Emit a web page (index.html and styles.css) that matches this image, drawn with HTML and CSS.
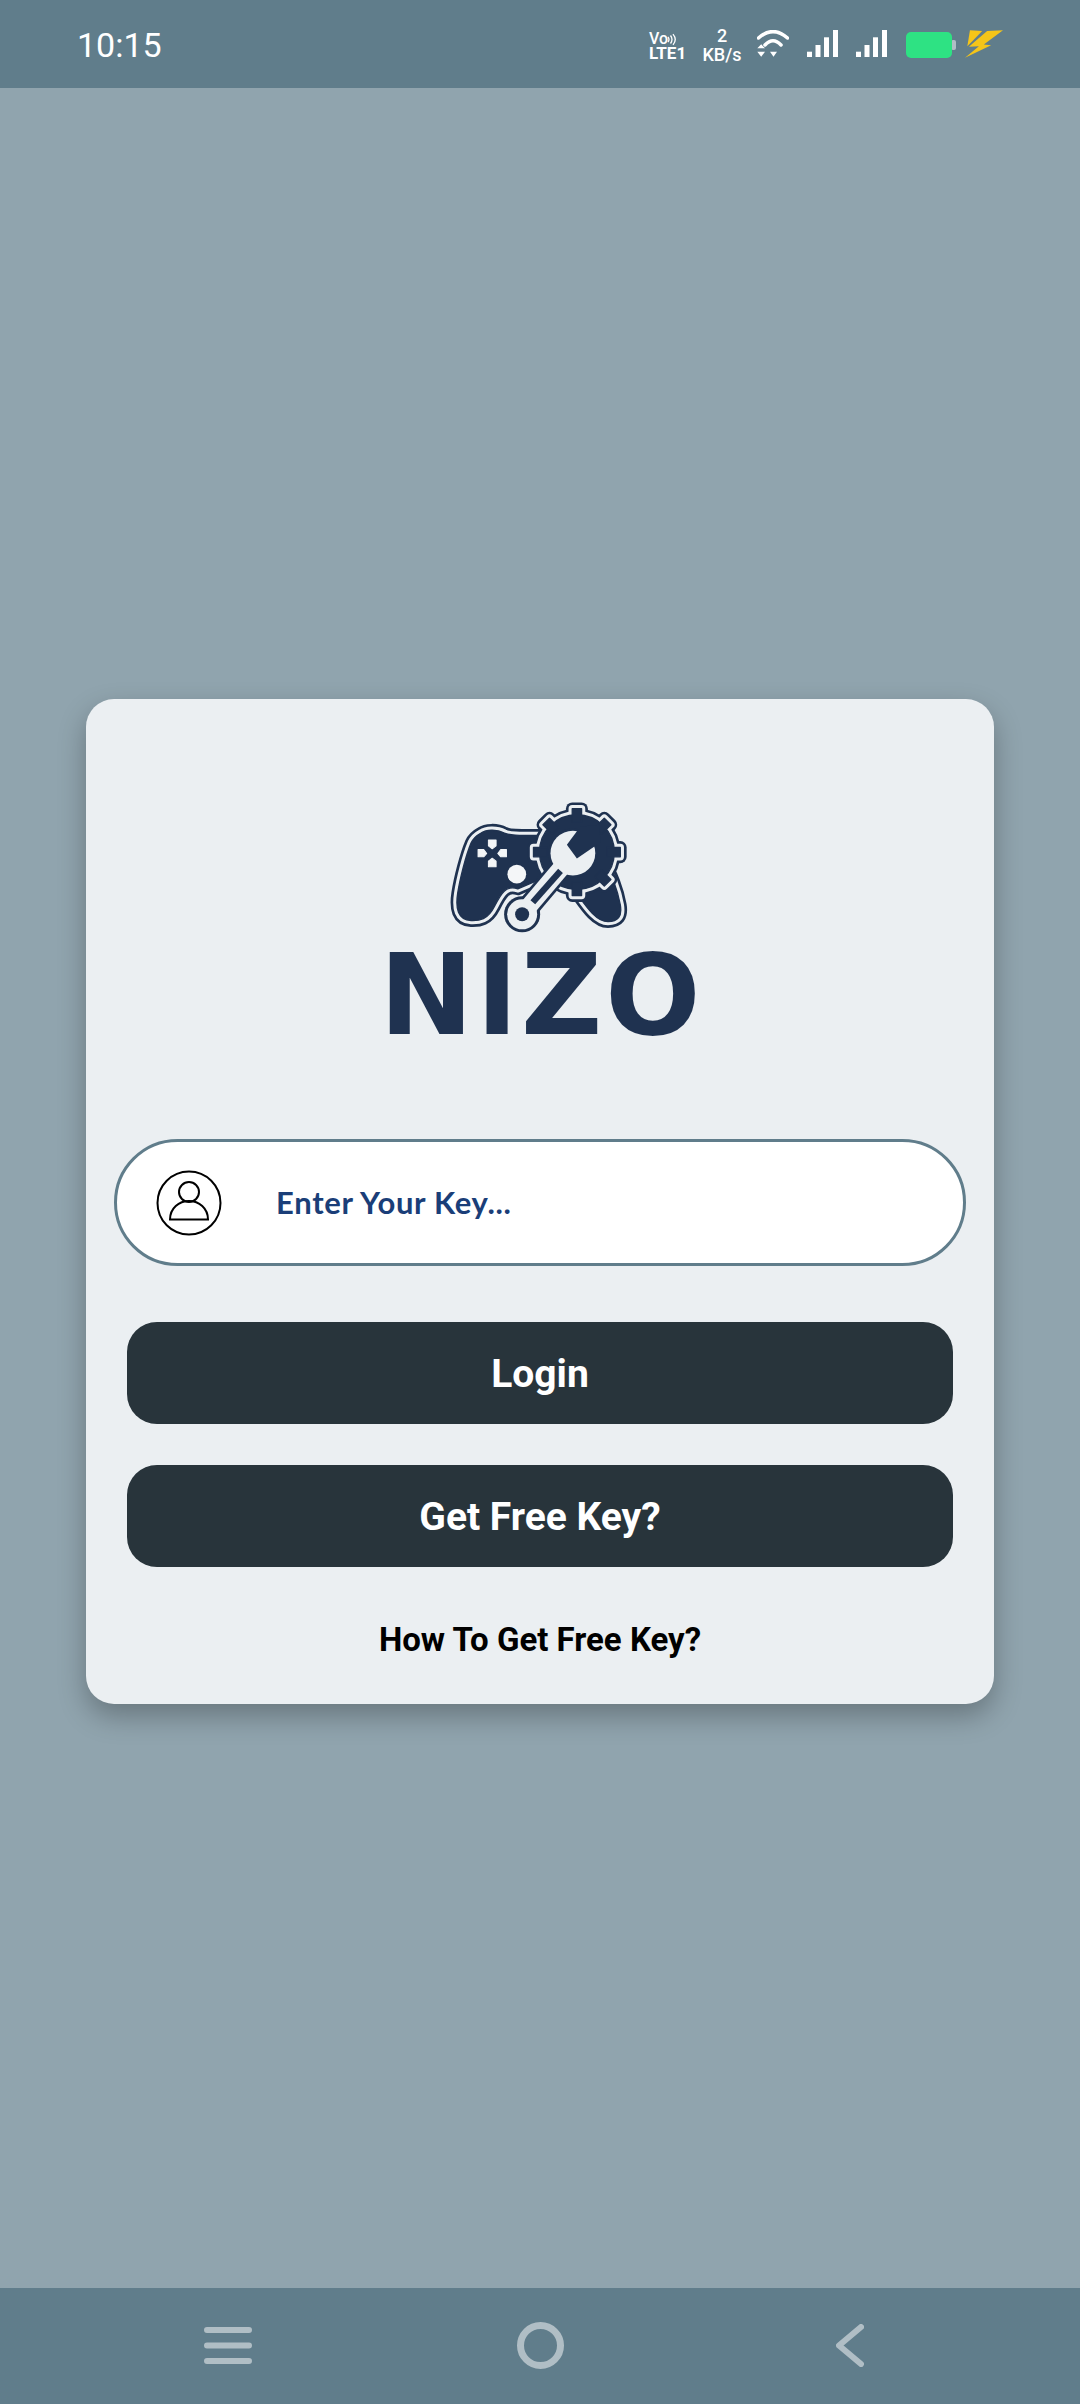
FILE: index.html
```html
<!DOCTYPE html>
<html lang="en">
<head>
<meta charset="utf-8">
<title>NIZO</title>
<link rel="stylesheet" href="styles.css">
</head>
<body>
<div class="screen">
  <header class="status-bar">
    <span class="time">10:15</span>
    <div class="status-icons">
      <div class="volte">
        <div class="volte-top"><span>Vo</span>
          <svg class="volte-arcs" viewBox="0 0 10 12"><path d="M1 3.5Q3 6 1 8.5M3.5 2Q6.5 6 3.5 10M6 .6Q10.5 6 6 11.4"/></svg>
        </div>
        <div class="volte-bottom">LTE1</div>
      </div>
      <div class="speed"><span>2</span><span>KB/s</span></div>
      <svg class="wifi" viewBox="0 0 32 27">
        <path class="wifi-arc" d="M1.5 8Q16 -4.8 30.5 8M8 15Q16 6.4 24 15"/>
        <path class="wifi-fill" d="M13 21.7H20L16.5 26.7ZM.3 18.3H8L4.2 14.3ZM.3 21.7H8L4.2 26.7Z"/>
      </svg>
      <svg class="signal signal-a" viewBox="0 0 32 27">
        <rect x="0" y="21.7" width="5" height="5.3"/><rect x="8.5" y="15" width="5" height="12"/><rect x="17" y="7.3" width="5" height="19.7"/><rect x="26" y="0" width="5" height="27"/>
      </svg>
      <svg class="signal signal-b" viewBox="0 0 32 27">
        <rect x="0" y="21.7" width="5" height="5.3"/><rect x="8.5" y="15" width="5" height="12"/><rect x="17" y="7.3" width="5" height="19.7"/><rect x="26" y="0" width="5" height="27"/>
      </svg>
      <svg class="battery" viewBox="0 0 50 26">
        <rect class="battery-cap" x="45" y="8" width="5" height="10" rx="2"/>
        <rect class="battery-body" x="0" y="0" width="46" height="26" rx="5"/>
      </svg>
      <svg class="bolt" viewBox="1033 60 115 83">
        <path d="M1048 60L1085 62L1058 90L1040 108Z"/>
        <path d="M1148 60L1100 62L1062 95L1045 110L1075 108L1033 143L1112 105L1090 103Z"/>
      </svg>
    </div>
  </header>

  <main class="content">
    <section class="card">
      <div class="logo">
        <svg class="logo-mark" viewBox="230 60 560 410">
          <defs>
            <path id="pad" d="M335 165C350 155 380 152 405 165C420 172 440 172 520 172L700 250C725 280 745 340 752 380C758 415 745 430 715 430C680 430 650 385 625 350L600 300L520 300L445 332C410 320 395 345 375 385C355 425 330 428 305 427C265 425 258 390 265 345C272 300 290 230 305 195C312 180 322 172 335 165Z"/>
            <g id="gear">
              <circle cx="622" cy="222" r="112"/>
              <g transform="translate(622 222)">
                <rect x="-14" y="-130" width="28" height="40"/>
                <rect x="-14" y="-130" width="28" height="40" transform="rotate(45)"/>
                <rect x="-14" y="-130" width="28" height="40" transform="rotate(90)"/>
                <rect x="-14" y="-130" width="28" height="40" transform="rotate(135)"/>
                <rect x="-14" y="-130" width="28" height="40" transform="rotate(180)"/>
                <rect x="-14" y="-130" width="28" height="40" transform="rotate(225)"/>
                <rect x="-14" y="-130" width="28" height="40" transform="rotate(270)"/>
                <rect x="-14" y="-130" width="28" height="40" transform="rotate(315)"/>
              </g>
            </g>
          </defs>
          <use href="#pad" class="layer-outer"/>
          <use href="#pad" class="layer-white"/>
          <use href="#pad" class="layer-inner"/>
          <g class="pad-buttons">
            <path d="M357 186H380V203L368.5 212L357 203Z"/>
            <path d="M326 214H343L352 226L343 236H326Z"/>
            <path d="M411 214H394L385 226L394 236H411Z"/>
            <path d="M357 266H380V249L368.5 240L357 249Z"/>
            <circle cx="442" cy="288" r="28"/>
          </g>
          <use href="#gear" class="layer-outer"/>
          <use href="#gear" class="layer-white"/>
          <use href="#gear" class="layer-inner"/>
          <g class="wrench-outline">
            <path d="M600 240L458 408"/>
            <circle cx="610" cy="225" r="74"/>
            <circle cx="458" cy="408" r="54"/>
          </g>
          <g class="wrench-body">
            <path d="M600 240L458 408"/>
            <circle cx="610" cy="225" r="67"/>
            <circle cx="458" cy="408" r="45"/>
          </g>
          <path class="wrench-dark" d="M632 146L592 200L622 241L692 193L690 140Z"/>
          <path class="wrench-slot" d="M573 278L490 372"/>
          <circle class="wrench-dark" cx="458" cy="408" r="21"/>
        </svg>
        <div class="logo-word">NIZO</div>
      </div>

      <div class="key-field">
        <svg class="user-icon" viewBox="0 0 66 66">
          <circle cx="33" cy="33" r="31.5"/>
          <circle cx="33" cy="22" r="10"/>
          <path d="M14 49.5C14 38 23 31 33 31S52 38 52 49.5Z"/>
        </svg>
        <span class="key-placeholder">Enter Your Key...</span>
      </div>

      <div class="actions">
        <button class="btn">Login</button>
        <button class="btn">Get Free Key?</button>
      </div>
      <a class="help-link">How To Get Free Key?</a>
    </section>
  </main>

  <nav class="nav-bar">
    <svg class="nav-menu" viewBox="0 0 48 37">
      <path d="M3 3H45M3 18.5H45M3 34H45"/>
    </svg>
    <svg class="nav-home" viewBox="0 0 47 47">
      <circle cx="23.5" cy="23.5" r="20"/>
    </svg>
    <svg class="nav-back" viewBox="0 0 28 43">
      <path d="M25 3L3 21.5L25 40"/>
    </svg>
  </nav>
</div>
</body>
</html>
```
FILE: styles.css
```css
* { box-sizing: border-box; }
html, body { margin: 0; padding: 0; }
body { font-family: Roboto, "Liberation Sans", sans-serif; background: #90a4ae; }

.screen { width: 1080px; height: 2404px; display: flex; flex-direction: column; overflow: hidden; background: #90a4ae; }

/* Status bar */
.status-bar { height: 88px; flex: none; background: #607d8b; display: flex; align-items: center; justify-content: space-between; padding: 0 77px 0 77px; color: #fff; }
.time { font-size: 34px; line-height: 1; margin-top: 2px; }
.status-icons { display: flex; align-items: center; height: 88px; }
.volte { width: 36px; margin-top: 4px; font-weight: 700; }
.volte-top { display: flex; align-items: center; height: 14px; font-size: 16px; line-height: 14px; font-weight: 500; }
.volte-arcs { width: 10px; height: 13px; margin-left: -1px; fill: none; stroke: #fff; stroke-width: 1.3; }
.volte-bottom { font-size: 17px; line-height: 14px; }
.speed { width: 42px; margin-left: 16px; margin-top: 1px; display: flex; flex-direction: column; align-items: center; font-size: 18px; line-height: 19px; font-weight: 500; }
.wifi { width: 32px; height: 27px; margin-left: 14px; margin-top: -1px; }
.wifi-arc { fill: none; stroke: #fff; stroke-width: 3.5; stroke-linecap: round; }
.wifi-fill { fill: #fff; }
.signal { width: 32px; height: 27px; fill: #fff; margin-top: -1px; }
.signal-a { margin-left: 18px; }
.signal-b { margin-left: 17px; }
.battery { width: 50px; height: 26px; margin-left: 18px; margin-top: 2px; }
.battery-body { fill: #2ee283; }
.battery-cap { fill: #b0bec5; }
.bolt { width: 38px; height: 28px; margin-left: 9px; fill: #f5c518; }

/* Main */
.content { flex: 1; padding: 611px 86px 0; }
.card { height: 1005px; background: #ebeff2; border-radius: 28px; box-shadow: 0 12px 28px rgba(0, 0, 0, .28); display: flex; flex-direction: column; align-items: center; padding: 99px 28px 0; }

.logo { display: flex; flex-direction: column; align-items: center; height: 341px; }
.logo-mark { width: 187px; height: 137px; display: block; }
.logo-mark use { stroke-linejoin: round; }
.layer-outer { fill: #1f3250; stroke: #1f3250; stroke-width: 38; }
.layer-white { fill: #1f3250; stroke: #ebeff2; stroke-width: 22; }
.layer-inner { fill: #1f3250; stroke: #1f3250; stroke-width: 4; }
.pad-buttons { fill: #f4f6f8; stroke: #f4f6f8; stroke-width: 3; stroke-linejoin: round; }
.pad-buttons circle { stroke: none; }
.wrench-outline { stroke: #1f3250; fill: #1f3250; }
.wrench-outline path { stroke-width: 68; fill: none; }
.wrench-body { stroke: #ebeff2; fill: #ebeff2; }
.wrench-body path { stroke-width: 52; fill: none; }
.wrench-outline circle, .wrench-body circle { stroke: none; }
.wrench-dark { fill: #1f3250; }
.wrench-slot { stroke: #1f3250; stroke-width: 19; fill: none; }
.logo-word { font-family: "DejaVu Sans", Inter, sans-serif; font-weight: 700; font-size: 112px; line-height: 98px; letter-spacing: 3px; margin-right: -3px; margin-top: 11px; color: #1f3250; height: 98px; }

.key-field { width: 852px; height: 127px; flex: none; background: #fff; border: 3px solid #607d8b; border-radius: 64px; display: flex; align-items: center; padding-left: 39px; }
.user-icon { width: 66px; height: 66px; flex: none; fill: none; stroke: #000; stroke-width: 2; }
.key-placeholder { margin-left: 54px; font-family: Lato, "Open Sans", sans-serif; font-weight: 700; font-size: 31px; letter-spacing: .7px; color: #1a3e78; line-height: 1; }

.actions { width: 826px; margin-top: 56px; display: flex; flex-direction: column; gap: 41px; }
.btn { height: 102px; border: none; border-radius: 30px; background: #28343b; color: #fff; font-family: Roboto, "Liberation Sans", sans-serif; font-weight: 700; font-size: 39px; padding: 2px 0 0; }

.help-link { margin-top: 54px; color: #000; font-weight: 700; font-size: 33px; line-height: 38px; }

/* Nav */
.nav-bar { height: 116px; flex: none; background: #607d8b; display: flex; align-items: center; padding-left: 204px; }
.nav-menu { width: 48px; height: 37px; fill: none; stroke: #b0bec5; stroke-width: 6; stroke-linecap: round; margin-top: -2px; }
.nav-home { width: 47px; height: 47px; fill: none; stroke: #b0bec5; stroke-width: 7; margin-left: 265px; margin-top: -2px; }
.nav-back { width: 28px; height: 43px; fill: none; stroke: #b0bec5; stroke-width: 6; stroke-linecap: round; stroke-linejoin: round; margin-left: 272px; margin-top: -2px; }
```
